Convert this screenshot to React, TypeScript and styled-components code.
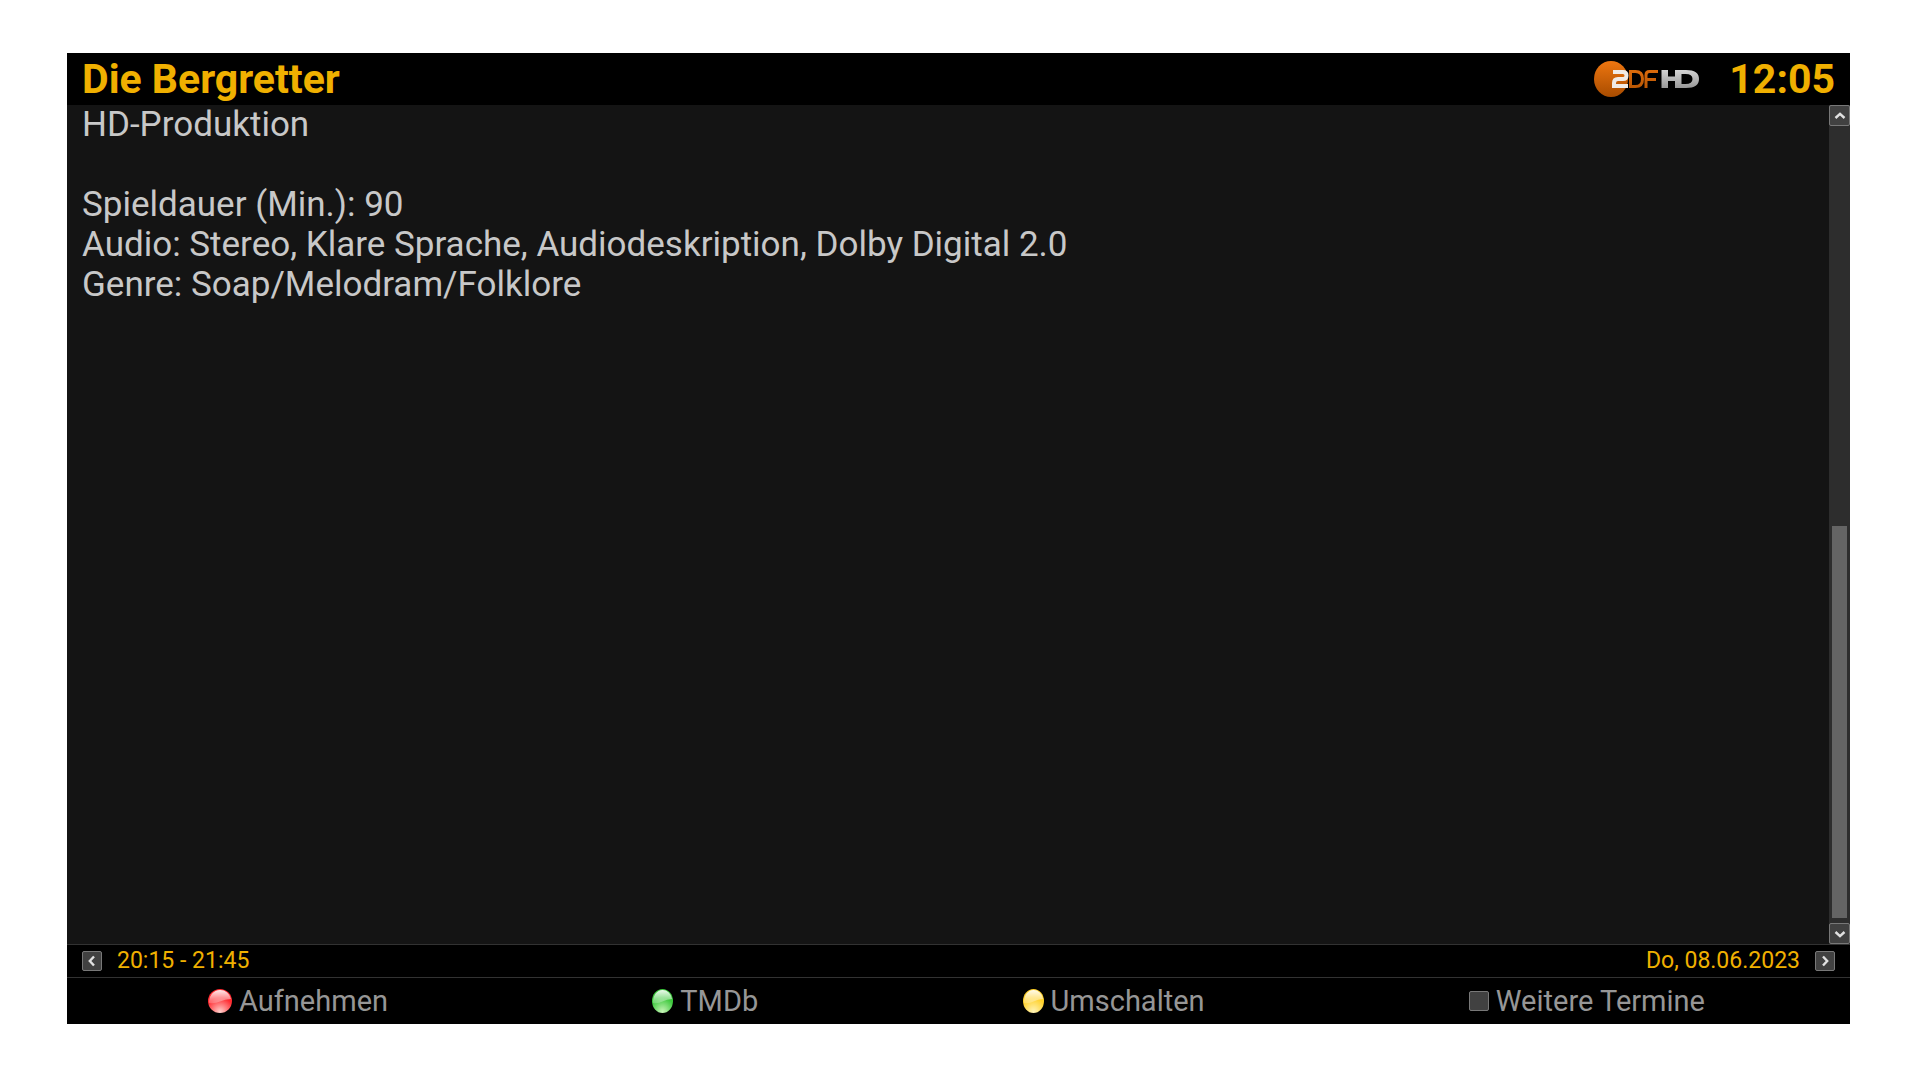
import React from "react";
import styled, { createGlobalStyle } from "styled-components";

const GlobalStyle = createGlobalStyle`
  *, *::before, *::after { box-sizing: border-box; }
  body { margin: 0; background: #fff; font-family: Roboto, "Liberation Sans", sans-serif; }
`;

const Page = styled.div`
  min-height: 100vh;
  display: flex;
  padding: 53px 70px 56px 67px;
`;

const Panel = styled.main`
  flex: 1;
  display: flex;
  flex-direction: column;
  background: #000;
`;

const Header = styled.header`
  display: flex;
  align-items: center;
  height: 52px;
  padding: 0 15px;
  color: #f0b000;
`;

const Title = styled.h1`
  flex: 1;
  margin: 0;
  font-size: 41px;
  line-height: 52px;
  font-weight: 700;
`;

const Clock = styled.time`
  min-width: 120px;
  text-align: right;
  font-size: 41px;
  line-height: 52px;
  font-weight: 700;
`;

const Logo = styled.svg`
  display: block;
  width: 105px;
  height: 36px;
  margin-right: 16px;
`;

const Body = styled.div`
  flex: 1;
  display: flex;
  background: #141414;
`;

const Description = styled.section`
  flex: 1;
  padding: 0 15px;
  color: #c8c8c8;
  font-size: 35px;
  line-height: 40px;
`;

const Line = styled.p`
  margin: 0;
  min-height: 40px;
`;

const Scrollbar = styled.div`
  width: 21px;
  display: flex;
  flex-direction: column;
  background: #2d2d2d;
`;

const Track = styled.div`
  flex: 1;
  display: flex;
  flex-direction: column;
  padding: 0 3px 5px;
`;

const TrackSpace = styled.div`
  flex: 400;
`;

const Thumb = styled.div`
  flex: 392;
  background: #646464;
`;

const ArrowButton = styled.button<{ $size: number }>`
  width: ${(p) => p.$size}px;
  height: ${(p) => p.$size}px;
  padding: 0;
  display: grid;
  place-items: center;
  border: 1px solid #787878;
  border-radius: 2px;
  background: #414141;
  color: #e1e1e1;
`;

const ArrowIcon = styled.svg`
  display: block;
  width: 14px;
  height: 14px;
  fill: none;
  stroke: currentColor;
  stroke-width: 2.4;
`;

const InfoBar = styled.div`
  display: flex;
  align-items: center;
  gap: 15px;
  height: 33px;
  padding: 0 15px;
  border-top: 1px solid #323232;
  color: #f0b000;
  font-size: 23px;
  line-height: 32px;
`;

const Period = styled.span`
  flex: 1;
`;

const Footer = styled.footer`
  display: flex;
  justify-content: space-between;
  height: 47px;
  padding: 0 145px 0 141px;
  border-top: 1px solid #323232;
`;

const KeyButton = styled.button`
  display: flex;
  align-items: center;
  gap: 7px;
  padding: 0;
  border: 0;
  background: none;
  color: #969696;
  font-family: inherit;
  font-size: 29px;
  line-height: 46px;
`;

const Ball = styled.svg<{ $width: number }>`
  display: block;
  width: ${(p) => p.$width}px;
  height: 24px;
`;

const Square = styled.span`
  width: 20px;
  height: 20px;
  border: 1px solid #787878;
  border-radius: 2px;
  background: #414141;
`;

const arrows = {
  up: "M2.500 9 7 4.800l4.500 4.200",
  down: "M2.500 5 7 9.200l4.500-4.200",
  left: "M9 2.500 4.800 7l4.200 4.500",
  right: "M5 2.500 9.200 7l-4.200 4.500",
};

function Arrow({ dir, label, size }: { dir: keyof typeof arrows; label: string; size: number }) {
  return (
    <ArrowButton type="button" aria-label={label} $size={size}>
      <ArrowIcon viewBox="0 0 14 14" aria-hidden="true">
        <path d={arrows[dir]} />
      </ArrowIcon>
    </ArrowButton>
  );
}

const keys = [
  { id: "red", label: "Aufnehmen", width: 24, base: "#ff2a30", glow: "#ffd0cc" },
  { id: "green", label: "TMDb", width: 21, base: "#3cc83c", glow: "#c8f5b8" },
  { id: "yellow", label: "Umschalten", width: 21, base: "#ffd028", glow: "#fff4b8" },
];

function KeyBall({ id, base, glow, width }: { id: string; base: string; glow: string; width: number }) {
  return (
    <Ball viewBox="0 0 24 24" preserveAspectRatio="none" $width={width} aria-hidden="true">
      <defs>
        <radialGradient id={`${id}-glow`} cx="0.5" cy="0.95" r="0.6">
          <stop offset="0" stopColor={glow} />
          <stop offset="1" stopColor={base} />
        </radialGradient>
        <linearGradient id={`${id}-shine`} x1="0" y1="0" x2="0" y2="1">
          <stop offset="0" stopColor="#fff" stopOpacity="0.9" />
          <stop offset="1" stopColor="#fff" stopOpacity="0.2" />
        </linearGradient>
      </defs>
      <circle cx="12" cy="12" r="12" fill={`url(#${id}-glow)`} />
      <path d="M1 14A11 12 0 0 1 12 1A11 11 0 0 1 23 10Q17 10 12 12.500T1 14z" fill={`url(#${id}-shine)`} />
    </Ball>
  );
}

function StationLogo() {
  return (
    <Logo viewBox="0 0 105 36" role="img" aria-label="ZDF HD">
      <defs>
        <linearGradient id="orange" x1="0" y1="0" x2="0" y2="36" gradientUnits="userSpaceOnUse">
          <stop offset="0" stopColor="#ee7610" />
          <stop offset="1" stopColor="#a84c00" />
        </linearGradient>
        <linearGradient id="silver" x1="0" y1="0" x2="0" y2="1">
          <stop offset="0" stopColor="#d4d4d4" />
          <stop offset="1" stopColor="#989898" />
        </linearGradient>
      </defs>
      <ellipse cx="17" cy="18" rx="17" ry="18" fill="url(#orange)" />
      <g fill="none" strokeWidth="3" stroke="url(#orange)">
        <path d="M36.500 10.500h5q7 0 7 7.500t-7 7.500h-5z" />
        <path d="M52 27V14q0-3.500 3.500-3.500H64M52 18.500h10" />
      </g>
      <path
        d="M19 11h10q3.500 0 3.500 3.500T29 18h-5q-4 0-4 4v3h14"
        fill="none"
        stroke="#f0ebe6"
        strokeWidth="4"
      />
      <path
        fill="url(#silver)"
        fillRule="evenodd"
        d="M67.500 9h6.500v6.500h7V9h11q13 0 13 9t-13 9H81v-7h-7v7h-6.500zM87.500 13v10h4q7 0 7-5t-7-5z"
      />
    </Logo>
  );
}

export default function App() {
  return (
    <>
      <GlobalStyle />
      <Page>
        <Panel>
          <Header>
            <Title>Die Bergretter</Title>
            <StationLogo />
            <Clock>12:05</Clock>
          </Header>
          <Body>
            <Description>
              <Line>HD-Produktion</Line>
              <Line />
              <Line>Spieldauer (Min.): 90</Line>
              <Line>Audio: Stereo, Klare Sprache, Audiodeskription, Dolby Digital 2.0</Line>
              <Line>Genre: Soap/Melodram/Folklore</Line>
            </Description>
            <Scrollbar>
              <Arrow dir="up" label="Nach oben" size={21} />
              <Track>
                <TrackSpace />
                <Thumb />
              </Track>
              <Arrow dir="down" label="Nach unten" size={21} />
            </Scrollbar>
          </Body>
          <InfoBar>
            <Arrow dir="left" label="Vorherige Sendung" size={20} />
            <Period>20:15 - 21:45</Period>
            <time>Do, 08.06.2023</time>
            <Arrow dir="right" label="Nächste Sendung" size={20} />
          </InfoBar>
          <Footer>
            {keys.map((key) => (
              <KeyButton type="button" key={key.id}>
                <KeyBall id={key.id} base={key.base} glow={key.glow} width={key.width} />
                {key.label}
              </KeyButton>
            ))}
            <KeyButton type="button">
              <Square />
              Weitere Termine
            </KeyButton>
          </Footer>
        </Panel>
      </Page>
    </>
  );
}
